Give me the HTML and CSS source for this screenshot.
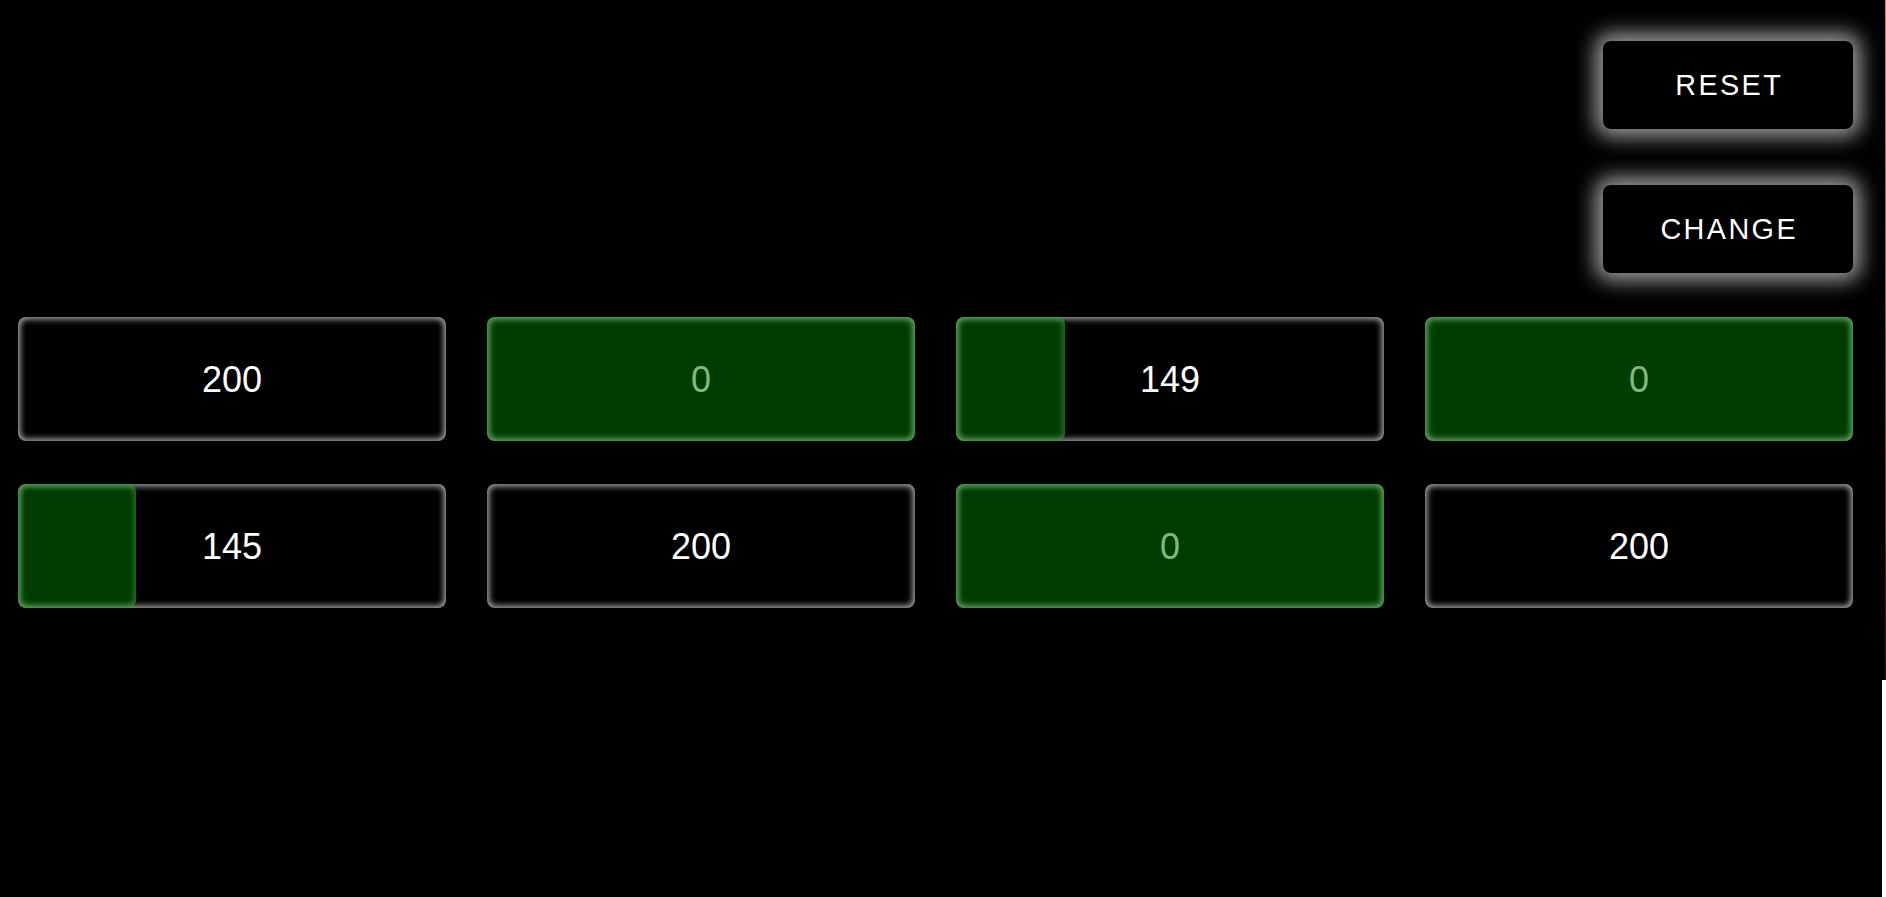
FILE: index.html
```html
<!DOCTYPE html>
<html lang="en">
<head>
<meta charset="utf-8">
<title>Counters</title>
<link rel="stylesheet" href="styles.css">
</head>
<body>
<div class="screen">
  <div class="controls">
    <button class="btn">RESET</button>
    <button class="btn">CHANGE</button>
  </div>
  <div class="grid">
    <div class="card"><span class="value">200</span><div class="fill" style="width:0%"></div></div>
    <div class="card"><span class="value">0</span><div class="fill" style="width:100%"></div></div>
    <div class="card"><span class="value">149</span><div class="fill" style="width:25.5%"></div></div>
    <div class="card"><span class="value">0</span><div class="fill" style="width:100%"></div></div>
    <div class="card"><span class="value">145</span><div class="fill" style="width:27.5%"></div></div>
    <div class="card"><span class="value">200</span><div class="fill" style="width:0%"></div></div>
    <div class="card"><span class="value">0</span><div class="fill" style="width:100%"></div></div>
    <div class="card"><span class="value">200</span><div class="fill" style="width:0%"></div></div>
  </div>
</div>
<div class="below"></div>
</body>
</html>
```

FILE: styles.css
```css
html {
  background: #ffffff;
}
body {
  margin: 0;
  font-family: "Liberation Sans", Arial, sans-serif;
  color: #ffffff;
}
.screen {
  box-sizing: border-box;
  width: 1886px;
  height: 680px;
  background: #000000;
  padding: 41px 32px 0 18px;
  border-right: 1px solid #8c5f4f;
  border-image: linear-gradient(#c89070, #2a1c16) 1;
}
.below {
  width: 1882px;
  height: 217px;
  background: #000000;
}
.controls {
  display: flex;
  flex-direction: column;
  align-items: flex-end;
  gap: 56px;
}
.btn {
  width: 250px;
  height: 88px;
  background: #000000;
  color: #ffffff;
  border: none;
  border-radius: 8px;
  font-family: "Liberation Sans", Arial, sans-serif;
  font-size: 28.8px;
  letter-spacing: 2.4px;
  padding: 0 0 0 2.4px;
  box-shadow: 0 0 20px 8px rgba(255, 255, 255, 0.6);
}
.grid {
  margin-top: 44px;
  display: grid;
  grid-template-columns: repeat(4, 1fr);
  column-gap: 41px;
  row-gap: 43px;
}
.card {
  position: relative;
  height: 124px;
  border-radius: 8px;
  background: #000000;
  box-shadow: inset 0 0 6px 2px rgba(220, 220, 220, 0.8);
  display: flex;
  align-items: center;
  justify-content: center;
  overflow: hidden;
}
.value {
  font-size: 36px;
  line-height: 1;
  padding-top: 2px;
}
.fill {
  position: absolute;
  left: 0;
  top: 0;
  bottom: 0;
  border-radius: 8px;
  background: rgba(0, 118, 0, 0.51);
  box-shadow: inset 0 0 6px 2px rgba(110, 200, 110, 0.4);
}
```
